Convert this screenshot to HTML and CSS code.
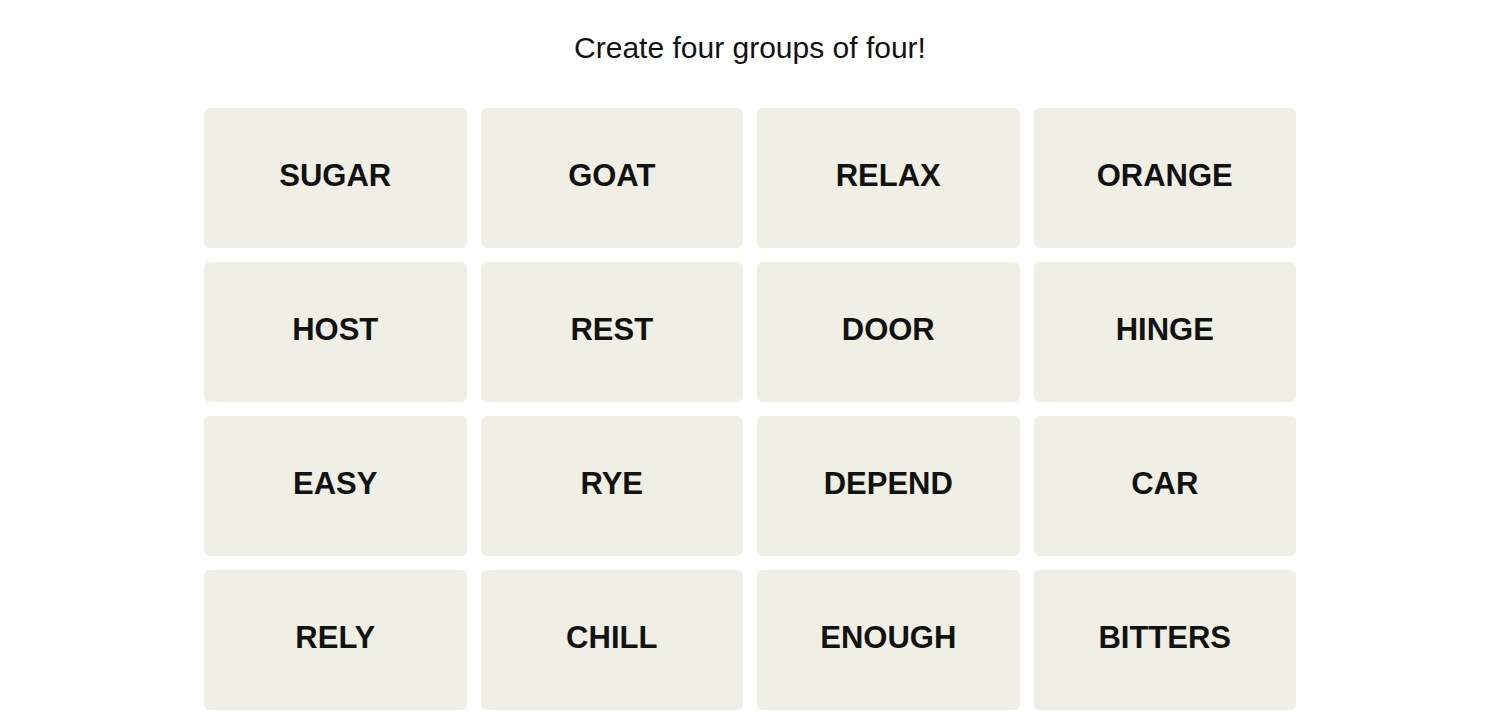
FILE: index.html
```html
<!DOCTYPE html>
<html lang="en">
<head>
    <meta charset="UTF-8">
    <title>Connections</title>
    <link rel="stylesheet" href="styles.css">
</head>
<body>
    <p class="title">Create four groups of four!</p>

    <div class="board">
        <button class="tile">SUGAR</button>
        <button class="tile">GOAT</button>
        <button class="tile">RELAX</button>
        <button class="tile">ORANGE</button>
        <button class="tile">HOST</button>
        <button class="tile">REST</button>
        <button class="tile">DOOR</button>
        <button class="tile">HINGE</button>
        <button class="tile">EASY</button>
        <button class="tile">RYE</button>
        <button class="tile">DEPEND</button>
        <button class="tile">CAR</button>
        <button class="tile">RELY</button>
        <button class="tile">CHILL</button>
        <button class="tile">ENOUGH</button>
        <button class="tile">BITTERS</button>
    </div>
</body>
</html>
```

FILE: styles.css
```css
body {
    margin: 0;
    font-family: "Liberation Sans", Arial, sans-serif;
    background: #fff;
    color: #121212;
}

.title {
    margin: 0;
    padding-top: 29px;
    height: 78px;
    box-sizing: border-box;
    text-align: center;
    font-size: 30px;
    line-height: 38px;
}

.board {
    width: 1092px;
    margin: 0 auto;
    display: grid;
    grid-template-columns: repeat(4, 1fr);
    grid-auto-rows: 140px;
    gap: 14px;
    padding-top: 30px;
}

.tile {
    border: none;
    border-radius: 6px;
    background: #efefe6;
    color: #121212;
    font-family: "Liberation Sans", Arial, sans-serif;
    font-weight: bold;
    font-size: 31px;
    text-transform: uppercase;
    padding: 0 0 4px;
}
```
